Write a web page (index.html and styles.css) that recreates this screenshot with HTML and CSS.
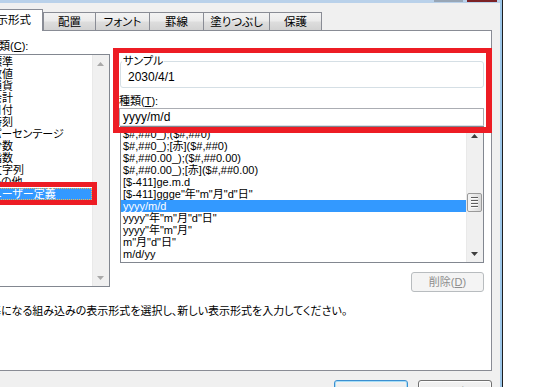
FILE: index.html
```html
<!DOCTYPE html>
<html lang="ja">
<head>
  <meta charset="UTF-8" />
  <meta name="viewport" content="width=device-width, initial-scale=1.0" />
  <title>セルの書式設定</title>
  <link rel="stylesheet" href="styles.css">
</head>
<body>

  <div class="window">
    <div class="caption-btn caption-max"></div>
    <div class="caption-btn caption-close"></div>

    <div class="tabs">
      <div class="tab active">表示形式</div>
      <div class="tab tab-haichi">配置</div>
      <div class="tab tab-font">フォント</div>
      <div class="tab tab-keisen">罫線</div>
      <div class="tab tab-nuri">塗りつぶし</div>
      <div class="tab tab-hogo">保護</div>
    </div>

    <div class="panel">
      <div class="panel-body">

        <div class="category">
          <div class="field-label">分類(<u>C</u>):</div>
          <div class="listbox category-list">
            <ul class="items">
              <li>標準</li>
              <li>数値</li>
              <li>通貨</li>
              <li>会計</li>
              <li>日付</li>
              <li>時刻</li>
              <li>パーセンテージ</li>
              <li>分数</li>
              <li>指数</li>
              <li>文字列</li>
              <li>その他</li>
              <li class="selected focused">ユーザー定義</li>
            </ul>
            <div class="scrollbar disabled">
              <div class="scroll-arrow">
                <svg width="7" height="4" viewBox="0 0 7 4"><path d="M0 4 L3.5 0 L7 4 Z" /></svg>
              </div>
              <div class="scroll-arrow">
                <svg width="7" height="4" viewBox="0 0 7 4"><path d="M0 0 L7 0 L3.5 4 Z" /></svg>
              </div>
            </div>
            <!-- annotation -->
            <div class="mark mark-category"></div>
          </div>
        </div>

        <div class="format">
          <fieldset class="sample">
            <legend>サンプル</legend>
            <div class="sample-value">2030/4/1</div>
          </fieldset>

          <div class="field-label type-label">種類(<u>T</u>):</div>
          <div class="textbox">yyyy/m/d</div>

          <div class="listbox format-list">
            <ul class="items">
              <li>$#,##0_);($#,##0)</li>
              <li>$#,##0_);[赤]($#,##0)</li>
              <li>$#,##0.00_);($#,##0.00)</li>
              <li>$#,##0.00_);[赤]($#,##0.00)</li>
              <li>[$-411]ge.m.d</li>
              <li>[$-411]ggge"年"m"月"d"日"</li>
              <li class="selected">yyyy/m/d</li>
              <li>yyyy"年"m"月"d"日"</li>
              <li>yyyy"年"m"月"</li>
              <li>m"月"d"日"</li>
              <li>m/d/yy</li>
            </ul>
            <div class="scrollbar">
              <div class="scroll-arrow">
                <svg width="7" height="4" viewBox="0 0 7 4"><path d="M0 4 L3.5 0 L7 4 Z" /></svg>
              </div>
              <div class="thumb"><div class="grip"></div></div>
              <div class="scroll-arrow bottom">
                <svg width="7" height="4" viewBox="0 0 7 4"><path d="M0 0 L7 0 L3.5 4 Z" /></svg>
              </div>
            </div>
          </div>

          <div class="actions">
            <button class="btn btn-delete" disabled>削除(<u>D</u>)</button>
          </div>

          <!-- annotation -->
          <div class="mark mark-format"></div>
        </div>

      </div>

      <p class="description">基になる組み込みの表示形式を選択し、新しい表示形式を入力してください。</p>
    </div>

    <div class="dialog-buttons">
      <button class="btn btn-default">OK</button>
      <button class="btn">キャンセル</button>
    </div>
  </div>

</body>
</html>
```

FILE: styles.css
```css
html,
body {
  margin: 0;
  padding: 0;
  background: #fff;
  overflow: hidden;
}

body {
  font-family: "Liberation Sans", "Noto Sans CJK JP", sans-serif;
  font-size: 11px;
  line-height: 14px;
  color: #000;
  font-feature-settings: "palt";
}

/* dialog frame, its left side is outside the picture */
.window {
  position: relative;
  box-sizing: border-box;
  width: 530px;
  margin-left: -30px;
  padding: 0 8px 0 12px;
  background: #f0f0f0;
  border-top: 3px solid #b9d1ea;
  box-shadow: 2px 0 0 #9cc6e8, 3px 0 0 #1e1e1e;
}

.caption-btn {
  position: absolute;
  top: -3px;
  height: 2px;
}

.caption-max {
  left: 464px;
  width: 29px;
  background: #98a6b6;
}

.caption-close {
  left: 497px;
  width: 30px;
  background: #7c2226;
}

/* tabs */
.tabs {
  display: flex;
  align-items: flex-end;
  height: 27px;
  margin-left: -10px;
}

.tab {
  box-sizing: border-box;
  height: 18px;
  padding-top: 2px;
  border: 1px solid #898c95;
  border-bottom: none;
  background: linear-gradient(#f3f3f3, #ebebeb 45%, #dddddd 55%, #d2d2d2);
  font-size: 11.5px;
  text-align: center;
  white-space: nowrap;
}

.tab + .tab {
  margin-left: -1px;
}

.tab.active + .tab {
  margin-left: 0;
}

.tab.active {
  position: relative;
  z-index: 1;
  height: 22px;
  margin-bottom: -1px;
  padding: 3px 11px 0 12px;
  background: #fff;
}

.tab-haichi { width: 53px; }
.tab-font { width: 55px; }
.tab-keisen { width: 55px; }
.tab-nuri { width: 67px; }
.tab-hogo { width: 53px; }

/* panel */
.panel {
  box-sizing: border-box;
  height: 341px;
  padding: 0 7px 0 5px;
  background: #fff;
  border: 1px solid #898c95;
}

.panel-body {
  display: flex;
  align-items: flex-start;
  gap: 9px;
}

.category {
  flex: none;
  width: 122px;
}

.format {
  position: relative;
  flex: 1;
  min-width: 0;
}

.field-label {
  margin: 8px 0 1px;
  white-space: nowrap;
}

.type-label {
  margin: 6px 0 0;
}

/* list boxes */
.listbox {
  position: relative;
  display: flex;
  box-sizing: border-box;
  border: 1px solid #828790;
  background: #fff;
}

.category-list {
  height: 233px;
}

.format-list {
  height: 137px;
  margin-left: 1px;
}

.items {
  flex: 1;
  min-width: 0;
  margin: 0;
  padding: 1px 0 0;
  list-style: none;
  line-height: 12px;
  white-space: nowrap;
  overflow: hidden;
}

.items li {
  height: 12px;
  padding-left: 2px;
}

.items li.selected {
  background: #3399ff;
  color: #fff;
}

.items li.focused {
  outline: 1px dotted #f2b44a;
  outline-offset: -1px;
}

.scrollbar {
  flex: none;
  display: flex;
  flex-direction: column;
  width: 17px;
  background: linear-gradient(to right, #e2e2e2, #f0f0f0 1px);
  color: #3e3e3e;
}

.scrollbar.disabled {
  justify-content: space-between;
  color: #a9a9a9;
}

.scroll-arrow {
  display: flex;
  align-items: center;
  justify-content: center;
  height: 17px;
}

.scroll-arrow svg {
  fill: currentColor;
}

.scroll-arrow.bottom {
  margin-top: auto;
}

.thumb {
  display: flex;
  align-items: center;
  justify-content: center;
  box-sizing: border-box;
  width: 15px;
  height: 19px;
  margin: 49px 0 0 1px;
  border: 1px solid #9a9a9a;
  border-radius: 2px;
  background: linear-gradient(to right, #f4f4f4, #e8e8e8 50%, #d9d9d9);
}

.grip {
  width: 7px;
  height: 11px;
  background: repeating-linear-gradient(#5e5e5e 0 1px, #fbfbfb 1px 2px, transparent 2px 3px);
}

/* sample box */
.sample {
  min-width: 0;
  margin: 23px 0 0 1px;
  padding: 2px 0 3px 1px;
  border: 1px solid #d5dfe5;
  border-radius: 3px;
}

.sample legend {
  padding: 0 1px;
  line-height: 14px;
}

.sample-value {
  margin-left: 6px;
  font-size: 12px;
}

.textbox {
  box-sizing: border-box;
  height: 18px;
  padding: 0 3px;
  font-size: 12px;
  line-height: 16px;
  border: 1px solid #abadb3;
  border-bottom-color: #dbdfe6;
}

/* buttons */
.actions {
  display: flex;
  justify-content: flex-end;
  margin-top: 9px;
}

.btn {
  box-sizing: border-box;
  width: 74px;
  height: 23px;
  padding: 0;
  font: inherit;
  color: #000;
  border: 1px solid #707070;
  border-radius: 3px;
  background: linear-gradient(#f2f2f2, #ebebeb 50%, #dddddd 50%, #cfcfcf);
  box-shadow: inset 0 0 0 1px #fcfcfc;
}

.btn-delete {
  width: 73px;
  height: 20px;
}

.btn:disabled {
  color: #8d8d8d;
  border-color: #b8bcbf;
  background: #f4f4f4;
  box-shadow: none;
}

.btn-default {
  border-color: #3c8fd0;
  box-shadow: inset 0 0 0 1px #a6def7;
}

.description {
  margin: 12px 0 0;
  padding-left: 2px;
  white-space: nowrap;
}

.dialog-buttons {
  display: flex;
  justify-content: flex-end;
  gap: 10px;
  margin-top: 9px;
  padding-bottom: 10px;
}

/* red annotation boxes drawn on the screenshot */
.mark {
  position: absolute;
  box-sizing: border-box;
  border: 5px solid #ed1c24;
  pointer-events: none;
}

.mark-format {
  left: -6px;
  top: 17px;
  width: 379px;
  height: 85px;
  border-width: 5px 6px 6px;
}

.mark-category {
  left: -9px;
  top: 127px;
  width: 117px;
  height: 23px;
}
```
